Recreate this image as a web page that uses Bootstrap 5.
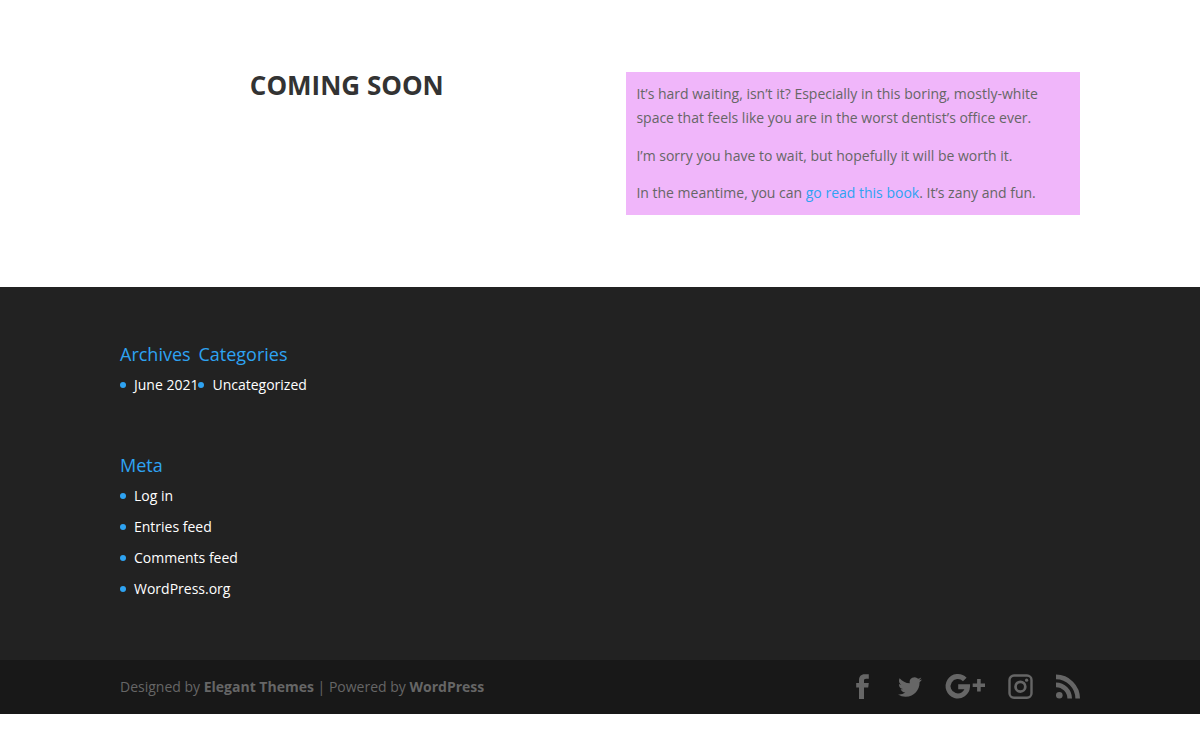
<!DOCTYPE html>
<html lang="en">
<head>
<meta charset="utf-8">
<meta name="viewport" content="width=device-width, initial-scale=1">
<title>Coming Soon</title>
<link rel="stylesheet" href="https://cdn.jsdelivr.net/npm/bootstrap@5.3.0/dist/css/bootstrap.min.css">
<style>
body { font-family: "Open Sans", Arial, sans-serif; font-size: 14px; line-height: 1.7; color: #666; background: #fff; }
a { text-decoration: none; }
.wrap { width: 80%; margin: 0 auto; }
.intro { padding: 72px 0; }
.intro-cols { display: grid; grid-template-columns: 1fr; row-gap: 32px; column-gap: 5.5%; }
@media (min-width: 768px) { .intro-cols { grid-template-columns: 1fr 1fr; } }
.intro h1 { font-size: 26px; line-height: 26px; font-weight: 700; color: #333; }
.note { background: #f0b6fa; padding: 10px; }
.note p { margin-bottom: 14px; }
.note p:last-child { margin-bottom: 0; }
.note a { color: #2ea3f2; }
.site-footer { background: #222; }
.widgets { padding: 58px 0 59px; row-gap: 59px; }
.widget-title { font-size: 18px; line-height: 18px; font-weight: 400; color: #2ea3f2; margin-bottom: 10px; }
.widget-list { display: grid; row-gap: 7px; line-height: 24px; }
.widget-list li { display: flex; align-items: center; gap: 8px; }
.widget-list li::before { content: ""; width: 6px; height: 6px; border-radius: 50%; background: #2ea3f2; }
.widget-list a { color: #fff; }
.footer-bar { background: #181818; }
.footer-bar .wrap { min-height: 54px; }
.credits a { font-weight: 700; }
.footer-bar a { color: #666; }
.social { gap: 24px; }
.social a { display: block; }
.social svg { display: block; height: 24px; width: 24px; fill: currentColor; overflow: visible; }
.social svg.wide { width: 38px; }
</style>
</head>
<body>
<main class="intro">
  <div class="wrap intro-cols">
    <h1 class="text-center mb-0">COMING SOON</h1>
    <div class="note">
      <p>It’s hard waiting, isn’t it? Especially in this boring, mostly-white space that feels like you are in the worst dentist’s office ever.</p>
      <p>I’m sorry you have to wait, but hopefully it will be worth it.</p>
      <p>In the meantime, you can <a href="#">go read this book</a>. It’s zany and fun.</p>
    </div>
  </div>
</main>
<footer class="site-footer">
  <div class="wrap widgets d-flex flex-column">
    <div class="d-flex">
      <section>
        <h2 class="widget-title">Archives</h2>
        <ul class="widget-list list-unstyled mb-0"><li><a href="#">June 2021</a></li></ul>
      </section>
      <section>
        <h2 class="widget-title">Categories</h2>
        <ul class="widget-list list-unstyled mb-0"><li><a href="#">Uncategorized</a></li></ul>
      </section>
    </div>
    <section>
      <h2 class="widget-title">Meta</h2>
      <ul class="widget-list list-unstyled mb-0">
        <li><a href="#">Log in</a></li>
        <li><a href="#">Entries feed</a></li>
        <li><a href="#">Comments feed</a></li>
        <li><a href="#">WordPress.org</a></li>
      </ul>
    </section>
  </div>
  <div class="footer-bar">
    <div class="wrap d-flex flex-wrap align-items-center justify-content-between">
      <p class="credits mb-0">Designed by <a href="#">Elegant Themes</a> | Powered by <a href="#">WordPress</a></p>
      <ul class="social d-flex list-unstyled mb-0">
        <li><a href="#" aria-label="Facebook"><svg viewBox="0 0 24 24"><path d="M9 24V12.500H6.200V8H9V5.500C9 1.500 11 -.700 14.600 -.700H18.800V3.700H16.200C14.300 3.700 14 4.500 14 5.800V8h4.800L18.200 12.500H14V24Z"/></svg></a></li>
        <li><a href="#" aria-label="Twitter"><svg viewBox="0 0 24 24"><path d="M23.953 4.570a10 10 0 01-2.825.775 4.958 4.958 0 002.163-2.723c-.951.555-2.005.959-3.127 1.184a4.920 4.920 0 00-8.384 4.482C7.690 8.095 4.067 6.130 1.640 3.162a4.822 4.822 0 00-.666 2.475c0 1.710.870 3.213 2.188 4.096a4.904 4.904 0 01-2.228-.616v.060a4.923 4.923 0 003.946 4.827 4.996 4.996 0 01-2.212.085 4.936 4.936 0 004.604 3.417 9.867 9.867 0 01-6.102 2.105c-.390 0-.779-.023-1.170-.067a13.995 13.995 0 007.557 2.209c9.053 0 13.998-7.496 13.998-13.985 0-.210 0-.420-.015-.630A9.935 9.935 0 0024 4.590z"/></svg></a></li>
        <li><a href="#" aria-label="Google Plus"><svg class="wide" viewBox="0 0 38 24"><path fill="none" stroke="currentColor" stroke-width="5" d="M18.800 4.500A9.700 9.700 0 1 0 21.500 11.700H12.200"/><path d="M31.100 4h3.600v4.500H39v3.600h-4.300v4.400h-3.600v-4.400h-4.400V8.500h4.400Z"/></svg></a></li>
        <li><a href="#" aria-label="Instagram"><svg viewBox="0 0 24 24"><g fill="none" stroke="currentColor"><rect x="1.500" y=".500" width="22" height="22.300" rx="4.500" stroke-width="2.400"/><circle cx="12.400" cy="11.700" r="4.900" stroke-width="2.700"/></g><circle cx="18.600" cy="5.200" r="1.600"/></svg></a></li>
        <li><a href="#" aria-label="RSS"><svg viewBox="0 0 24 24"><circle cx="3.300" cy="20.300" r="3.300"/><path fill="none" stroke="currentColor" stroke-width="4.600" d="M0 9.900A13.700 13.700 0 0 1 13.700 23.600M0 1.900A21.700 21.700 0 0 1 21.700 23.600"/></svg></a></li>
      </ul>
    </div>
  </div>
</footer>
<script src="https://cdn.jsdelivr.net/npm/bootstrap@5.3.0/dist/js/bootstrap.bundle.min.js"></script>
</body>
</html>
